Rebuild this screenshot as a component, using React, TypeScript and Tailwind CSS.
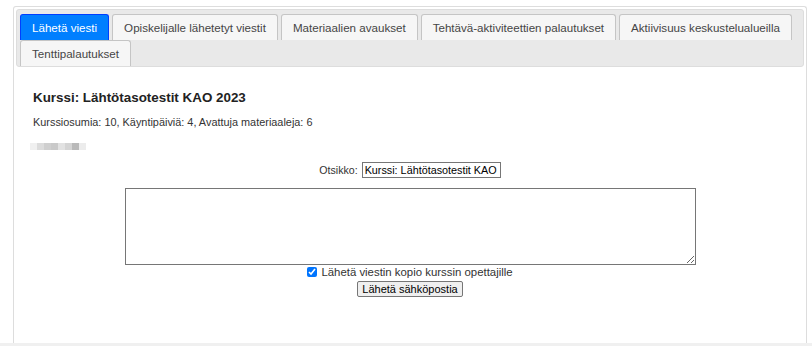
const tabs = [
  "Lähetä viesti",
  "Opiskelijalle lähetetyt viestit",
  "Materiaalien avaukset",
  "Tehtävä-aktiviteettien palautukset",
  "Aktiivisuus keskustelualueilla",
  "Tenttipalautukset",
];

// pixelated (blurred) name placeholder
const blur = ["#f0f0f0", "#dcdcdc", "#cfcfcf", "#c9c9c9", "#e2e2e2", "#d4d4d4", "#b9b9b9", "#ececec"];

export default function App() {
  return (
    <div className="flex h-[346px] w-[812px] flex-col overflow-hidden bg-white font-['Liberation_Sans',Arial,sans-serif] text-[#333]">
      <div className="ml-[13px] mt-[6px] h-[337px] w-[794px] rounded-t-[3px] border border-b-0 border-[#dddddd] p-[2px]">
        <ul className="flex flex-wrap gap-x-[3px] rounded-[3px] border border-[#dddddd] bg-[#e9e9e9] px-[3px] pt-[4px]">
          {tabs.map((t, i) => (
            <li
              key={t}
              className={
                i === 0
                  ? "rounded-t-[3px] border border-b-0 border-[#003eff] bg-[#007fff] px-[11px] py-[6px] text-[11.6px] leading-[13px] whitespace-nowrap text-white"
                  : "rounded-t-[3px] border border-b-0 border-[#c5c5c5] bg-[#f6f6f6] px-[11px] py-[6px] text-[11.6px] leading-[13px] whitespace-nowrap text-[#454545]"
              }
            >
              {t}
            </li>
          ))}
        </ul>

        <div className="px-[17px] pt-[23px]">
          <h2 className="text-[13.4px] leading-[16px] font-bold text-[#222]">Kurssi: Lähtötasotestit KAO 2023</h2>
          <p className="mt-[10px] text-[10.9px] leading-[13px]">
            Kurssiosumia: 10, Käyntipäiviä: 4, Avattuja materiaaleja: 6
          </p>
          <div className="mt-[14px] ml-[-3px] flex h-[7px] blur-[0.4px]">
            {blur.map((c, i) => (
              <div key={i} className="h-full w-[7px]" style={{ backgroundColor: c }} />
            ))}
          </div>

          <div className="flex flex-col items-center">
            <div className="mt-[12px] flex items-center gap-[4px] text-[10.6px] leading-[13px]">
              <span>Otsikko:</span>
              <input
                defaultValue="Kurssi: Lähtötasotestit KAO 2023"
                className="h-[16px] w-[139px] border border-[#767676] px-[2px] text-[10.8px] text-black"
              />
            </div>
            <textarea className="mt-[10px] h-[77px] w-[571px] border border-[#767676] bg-white" />
            <label className="flex h-[14px] items-center gap-[4px] text-[11.4px] leading-[14px]">
              <input type="checkbox" defaultChecked className="h-[10px] w-[10px] accent-[#0075ff]" />
              Lähetä viestin kopio kurssin opettajille
            </label>
            <button className="mt-[2px] h-[16px] rounded-[2px] border border-[#767676] bg-[#efefef] px-[4px] text-[11px] leading-[13px] text-black">
              Lähetä sähköpostia
            </button>
          </div>
        </div>
      </div>
      <div className="h-[3px] bg-[#f0f0f0]" />
    </div>
  );
}
